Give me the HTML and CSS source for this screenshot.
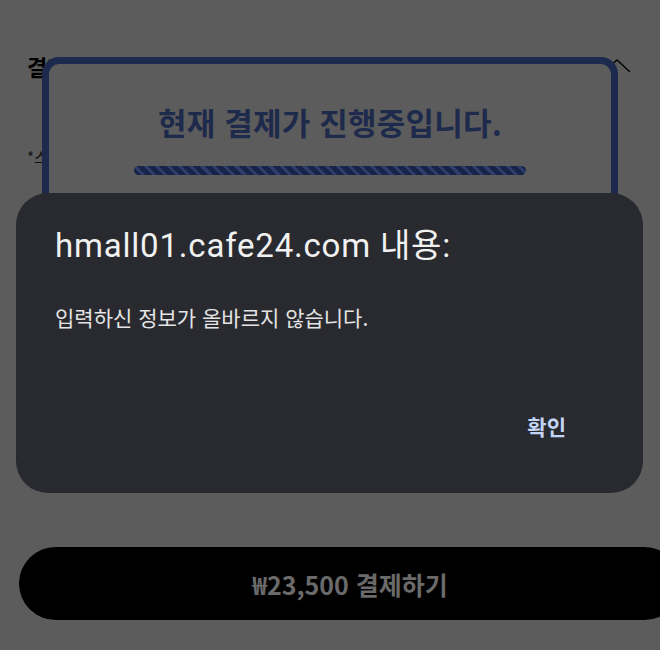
FILE: index.html
```html
<!DOCTYPE html>
<html lang="ko">
<head>
<meta charset="utf-8">
<title>결제</title>
<link rel="stylesheet" href="styles.css">
</head>
<body>
<div class="page">
  <div class="section-head">
    <h2 class="section-title">결제 정보 입력</h2>
    <svg class="chevron" width="28" height="14" viewBox="0 0 28 14"><path d="M1 13 L14 1 L27 13" fill="none" stroke="#000" stroke-width="1.3"/></svg>
  </div>
  <p class="note">*스마트폰 결제 시 카드사 앱을 이용해 주세요.</p>
  <div class="footer">
    <button class="pay-btn">₩23,500 결제하기</button>
  </div>
</div>

<div class="progress-box">
  <h3 class="progress-title">현재 결제가 진행중입니다.</h3>
  <div class="progress-bar"></div>
</div>

<div class="dialog">
  <div class="dialog-title">hmall01.cafe24.com 내용:</div>
  <div class="dialog-msg">입력하신 정보가 올바르지 않습니다.</div>
  <div class="dialog-actions"><span class="dialog-ok">확인</span></div>
</div>
</body>
</html>
```
FILE: styles.css
```css
html, body {
  margin: 0;
  padding: 0;
}
body {
  width: 660px;
  height: 650px;
  overflow: hidden;
  background: #5c5c5c;
  font-family: "Noto Sans CJK KR", "Noto Sans", sans-serif;
  position: relative;
}
.page {
  display: flex;
  flex-direction: column;
  padding: 50px 0 0 27px;
}
.section-head {
  display: flex;
  justify-content: space-between;
  align-items: flex-start;
  padding-right: 29px;
}
.section-title {
  margin: 0;
  font-size: 22px;
  font-weight: 700;
  color: #000;
  line-height: 32px;
}
.chevron {
  margin-top: 9px;
}
.note {
  margin: 64px 0 0 0;
  font-size: 15px;
  color: #111;
  line-height: 22px;
}
.footer {
  margin-top: 379px;
  margin-left: -8px;
}
.pay-btn {
  width: 662px;
  height: 73px;
  border: 0;
  border-radius: 37px;
  background: #000;
  color: #6a6a6a;
  font-family: "Noto Sans CJK KR", sans-serif;
  font-weight: 700;
  font-size: 25px;
  letter-spacing: 0;
  padding: 0;
}
.progress-box {
  position: absolute;
  left: 42px;
  top: 57px;
  width: 562px;
  height: 220px;
  border: 7px solid #1d2a4d;
  border-radius: 17px;
  background: #5c5c5c;
  display: flex;
  flex-direction: column;
  align-items: center;
  padding-top: 39px;
  box-sizing: content-box;
}
.progress-title {
  margin: 0;
  font-size: 31px;
  font-weight: 700;
  color: #1e2a4c;
  line-height: 38px;
  letter-spacing: 0.2px;
}
.progress-bar {
  margin-top: 25px;
  width: 392px;
  height: 9px;
  border-radius: 5px;
  background: repeating-linear-gradient(45deg, #18234a 0 5px, #2e3d69 5px 8px);
}
.dialog {
  position: absolute;
  left: 16px;
  top: 193px;
  width: 627px;
  height: 300px;
  box-sizing: border-box;
  border-radius: 32px;
  background: #292a2f;
  padding: 34px 77px 0 39px;
  display: flex;
  flex-direction: column;
}
.dialog-title {
  font-family: "Roboto", "Noto Sans CJK KR", sans-serif;
  font-size: 33px;
  line-height: 38px;
  color: #f1f1f1;
  font-weight: 400;
  letter-spacing: 0.8px;
}
.dialog-msg {
  margin-top: 38px;
  font-size: 21px;
  line-height: 28px;
  color: #e4e4e4;
}
.dialog-actions {
  margin-top: 81px;
  display: flex;
  justify-content: flex-end;
}
.dialog-ok {
  font-size: 21px;
  line-height: 28px;
  font-weight: 700;
  color: #c3d5f6;
}
```
